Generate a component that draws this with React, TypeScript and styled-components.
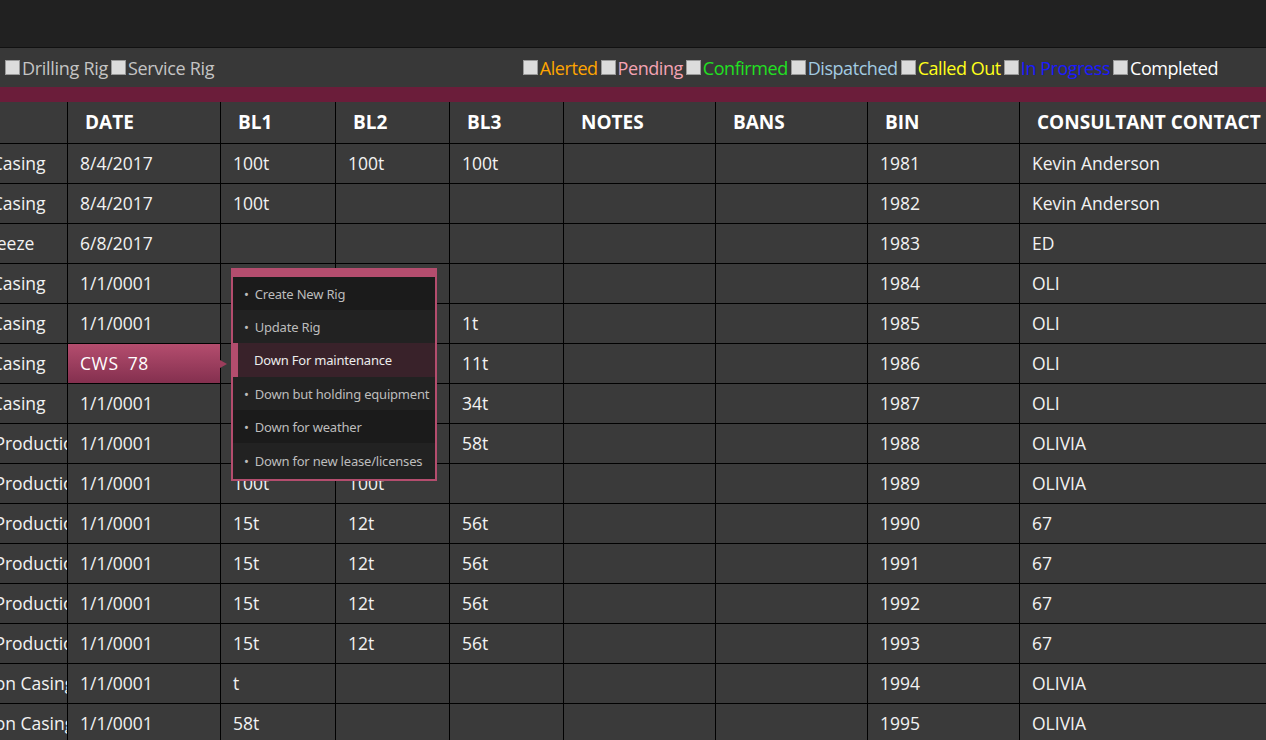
import React from "react";
import styled, { createGlobalStyle } from "styled-components";

const Global = createGlobalStyle`
  html, body { margin: 0; padding: 0; background: #3a3a3a; overflow: hidden; }
  body { font-family: "Open Sans", "Noto Sans", sans-serif; width: 1266px; height: 740px; }
`;

const Page = styled.div`
  width: 1266px;
  height: 740px;
  overflow: hidden;
  display: flex;
  flex-direction: column;
  background: #3a3a3a;
`;

const TopBar = styled.div`
  height: 47px;
  flex: none;
  background: #212121;
  border-bottom: 1px solid #111;
`;

const FilterBar = styled.div`
  height: 39px;
  flex: none;
  background: #383838;
  display: flex;
  align-items: center;
  padding: 0 48px 0 5px;
  font-size: 18px;
`;

const Group = styled.div<{ $right?: boolean }>`
  display: flex;
  align-items: center;
  gap: 3px;
  margin-left: ${(p) => (p.$right ? "auto" : "0")};
`;

const Filter = styled.label<{ $color: string; $tight?: boolean }>`
  display: flex;
  align-items: center;
  color: ${(p) => p.$color};
  letter-spacing: ${(p) => (p.$tight ? "-0.45px" : "-0.3px")};
  white-space: nowrap;
`;

const Box = styled.span`
  width: 13px;
  height: 13px;
  margin-right: 2px;
  background: #dcdcdc;
  border: 1px solid #9a9a9a;
  box-sizing: content-box;
`;

const Stripe = styled.div`
  height: 15px;
  flex: none;
  background: #6b1d3a;
`;

const TableWrap = styled.div`
  flex: 1;
  margin-left: -87px;
`;

const Table = styled.table`
  border-collapse: collapse;
  table-layout: fixed;
  width: 1406px;
  color: #f2f2f2;
`;

const Th = styled.th<{ $w: number }>`
  width: ${(p) => p.$w}px;
  height: 41px;
  box-sizing: border-box;
  text-align: left;
  padding: 0 0 0 17px;
  font-size: 19px;
  font-weight: 700;
  color: #fff;
  border: 1px solid #000;
  border-top: none;
  white-space: nowrap;
  overflow: hidden;
`;

const Td = styled.td`
  height: 40px;
  box-sizing: border-box;
  padding: 0 0 0 12px;
  font-size: 17.5px;
  border: 1px solid #000;
  white-space: nowrap;
  overflow: hidden;
`;

const Clip = styled.div`
  overflow: hidden;
  white-space: nowrap;
`;

const SelCell = styled.td`
  height: 40px;
  box-sizing: border-box;
  padding: 0;
  border: 1px solid #000;
  position: relative;
`;

const SelInner = styled.div`
  height: 39px;
  display: flex;
  align-items: center;
  padding-left: 12px;
  font-size: 17.5px;
  color: #fff;
  letter-spacing: 0.6px;
  word-spacing: 4px;
  background: linear-gradient(#b44d6e, #84304f);
`;

const Arrow = styled.span`
  position: absolute;
  right: -7px;
  top: 16px;
  width: 0;
  height: 0;
  border-top: 4px solid transparent;
  border-bottom: 4px solid transparent;
  border-left: 7px solid #9c3d5c;
  z-index: 2;
`;

const Menu = styled.ul`
  position: absolute;
  left: 163px;
  top: -76px;
  width: 202px;
  margin: 0;
  padding: 0;
  list-style: none;
  border: 2px solid #b44d6e;
  border-top-width: 9px;
  background: #1b1b1b;
  z-index: 5;
  font-family: "Noto Sans", "Open Sans", sans-serif;
`;

const Item = styled.li<{ $sel?: boolean; $alt?: boolean; $h: number }>`
  height: ${(p) => p.$h}px;
  display: flex;
  align-items: center;
  font-size: 13px;
  letter-spacing: -0.2px;
  white-space: nowrap;
  color: ${(p) => (p.$sel ? "#ececec" : "#bdbdbd")};
  background: ${(p) => (p.$sel ? "#39222a" : p.$alt ? "#222222" : "#1b1b1b")};
  padding-left: ${(p) => (p.$sel ? "16px" : "11px")};
  padding-top: 1px;
  box-sizing: border-box;
  border-left: ${(p) => (p.$sel ? "5px solid #b44d6e" : "none")};
  &::before {
    content: "${(p) => (p.$sel ? "" : "•")}";
    color: #bdbdbd;
    font-size: 13px;
    margin-right: ${(p) => (p.$sel ? "0" : "6px")};
  }
`;

type Row = [string, string, string, string, string, string, string];

const rows: Row[] = [
  ["Surface Casing", "8/4/2017", "100t", "100t", "100t", "1981", "Kevin Anderson"],
  ["Surface Casing", "8/4/2017", "100t", "", "", "1982", "Kevin Anderson"],
  ["Plug Squeeze", "6/8/2017", "", "", "", "1983", "ED"],
  ["Surface Casing", "1/1/0001", "", "", "", "1984", "OLI"],
  ["Surface Casing", "1/1/0001", "1t", "1t", "1t", "1985", "OLI"],
  ["Surface Casing", "CWS", "11t", "11t", "11t", "1986", "OLI"],
  ["Surface Casing", "1/1/0001", "34t", "34t", "34t", "1987", "OLI"],
  ["Cement Production Casing", "1/1/0001", "58t", "58t", "58t", "1988", "OLIVIA"],
  ["Cement Production Casing", "1/1/0001", "100t", "100t", "", "1989", "OLIVIA"],
  ["Cement Production Casing", "1/1/0001", "15t", "12t", "56t", "1990", "67"],
  ["Cement Production Casing", "1/1/0001", "15t", "12t", "56t", "1991", "67"],
  ["Cement Production Casing", "1/1/0001", "15t", "12t", "56t", "1992", "67"],
  ["Cement Production Casing", "1/1/0001", "15t", "12t", "56t", "1993", "67"],
  ["Production Casing", "1/1/0001", "t", "", "", "1994", "OLIVIA"],
  ["Production Casing", "1/1/0001", "58t", "", "", "1995", "OLIVIA"],
];

const cols: [string, number][] = [
  ["", 154],
  ["DATE", 153],
  ["BL1", 115],
  ["BL2", 114],
  ["BL3", 114],
  ["NOTES", 152],
  ["BANS", 152],
  ["BIN", 152],
  ["CONSULTANT CONTACT", 300],
];

const menuItems: [string, number][] = [
  ["Create New Rig", 33],
  ["Update Rig", 33],
  ["Down For maintenance", 34],
  ["Down but holding equipment", 33],
  ["Down for weather", 33],
  ["Down for new lease/licenses", 36],
];

const filtersRight: [string, string][] = [
  ["Alerted", "#ffa500"],
  ["Pending", "#f4a3b4"],
  ["Confirmed", "#22e022"],
  ["Dispatched", "#a2cbe2"],
  ["Called Out", "#ffff1a"],
  ["In Progress", "#1a1aff"],
  ["Completed", "#ffffff"],
];

export default function App() {
  return (
    <Page>
      <Global />
      <TopBar />
      <FilterBar>
        <Group>
          <Filter $color="#c4c4c4"><Box />Drilling Rig</Filter>
          <Filter $color="#c4c4c4"><Box />Service Rig</Filter>
        </Group>
        <Group $right>
          {filtersRight.map(([t, c]) => (
            <Filter key={t} $color={c} $tight><Box />{t}</Filter>
          ))}
        </Group>
      </FilterBar>
      <Stripe />
      <TableWrap>
        <Table>
          <thead>
            <tr>
              {cols.map(([t, w], i) => (
                <Th key={i} $w={w}>{t}</Th>
              ))}
            </tr>
          </thead>
          <tbody>
            {rows.map((r, i) => (
              <tr key={i}>
                <Td><Clip>{r[0]}</Clip></Td>
                {r[1] === "CWS" ? (
                  <SelCell>
                    <SelInner>CWS 78</SelInner>
                    <Arrow />
                    <Menu>
                      {menuItems.map(([t, h], j) => (
                        <Item key={t} $h={h} $sel={j === 2} $alt={j % 2 === 1}>{t}</Item>
                      ))}
                    </Menu>
                  </SelCell>
                ) : (
                  <Td>{r[1]}</Td>
                )}
                <Td>{r[2]}</Td>
                <Td>{r[3]}</Td>
                <Td>{r[4]}</Td>
                <Td />
                <Td />
                <Td>{r[5]}</Td>
                <Td>{r[6]}</Td>
              </tr>
            ))}
          </tbody>
        </Table>
      </TableWrap>
    </Page>
  );
}
